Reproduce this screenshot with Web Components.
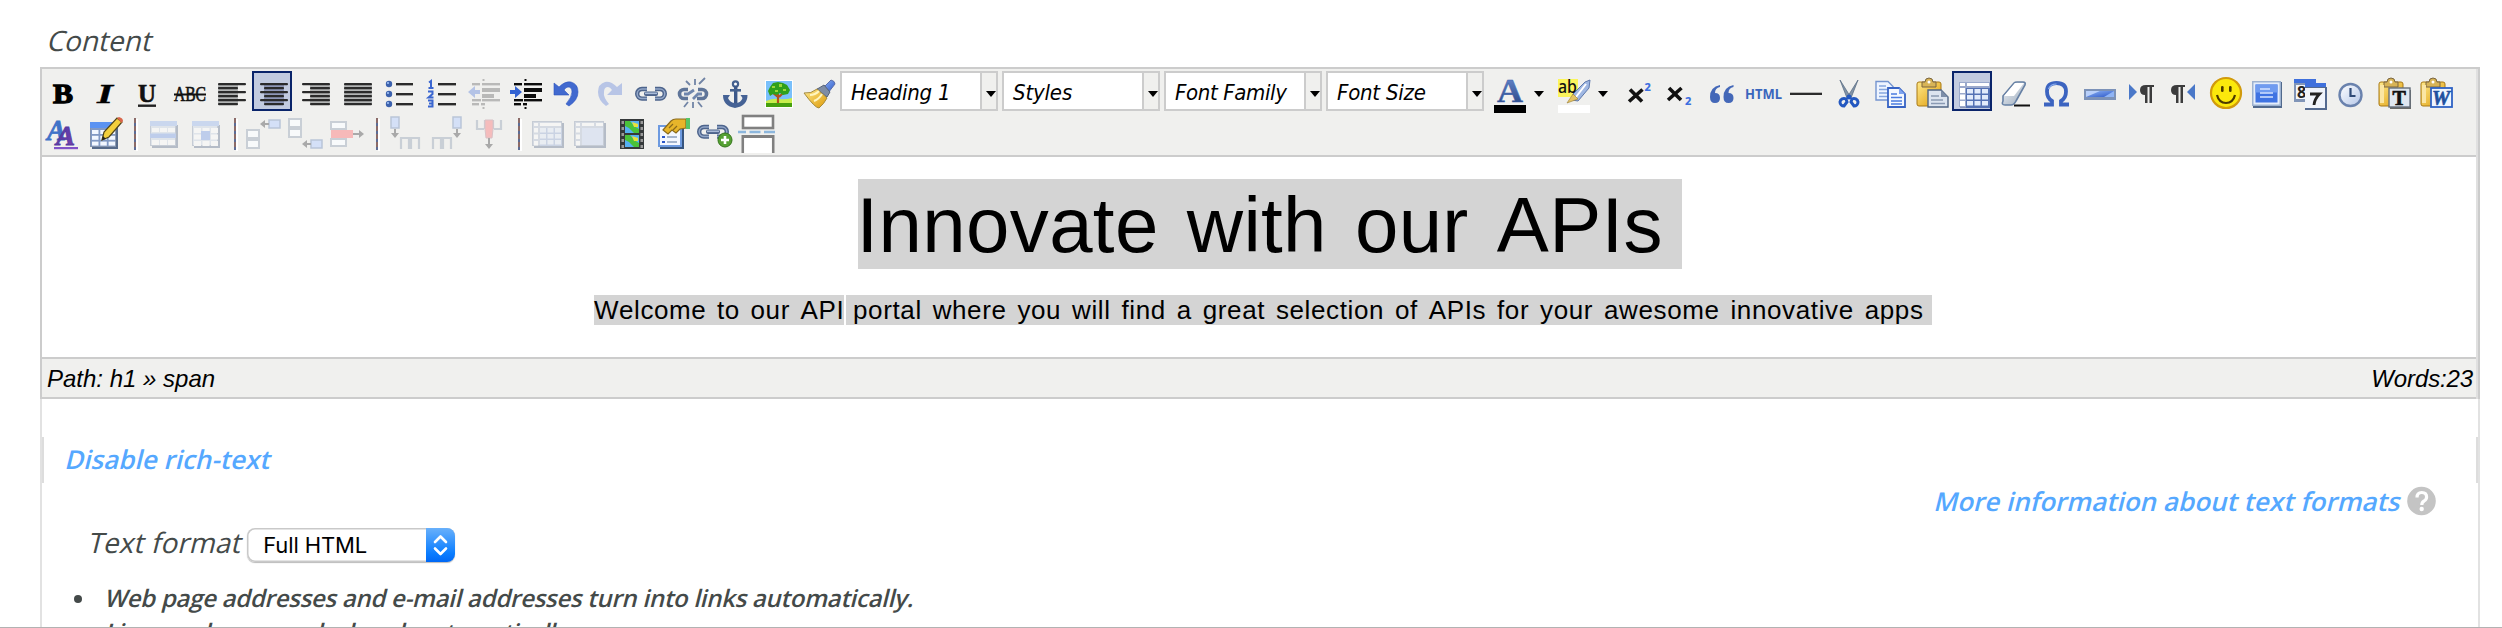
<!DOCTYPE html>
<html lang="en">
<head>
<meta charset="utf-8">
<title>Content editor</title>
<style>
html,body{margin:0;padding:0;background:#fff}
body{width:2502px;height:628px;overflow:hidden;font-family:"Open Sans","Noto Sans",sans-serif}
</style>
</head>
<body>
<content-page></content-page>
<script>
/* Gradients shared by the icon drawings; copied into each icon's own svg. */
const DEFS = `<defs>
<linearGradient id="bl" x1="0" y1="0" x2="1" y2="1"><stop offset="0" stop-color="#8fb4f5"/><stop offset="1" stop-color="#2a56c8"/></linearGradient>
<linearGradient id="nv" x1="0" y1="0" x2="0" y2="1"><stop offset="0" stop-color="#6d90d6"/><stop offset="1" stop-color="#223f7c"/></linearGradient>
<linearGradient id="gd" x1="0" y1="0" x2="1" y2="1"><stop offset="0" stop-color="#ffe98a"/><stop offset="1" stop-color="#dd9a08"/></linearGradient>
<linearGradient id="wh" x1="0" y1="0" x2="1" y2="1"><stop offset="0" stop-color="#fff"/><stop offset="1" stop-color="#b4c6e8"/></linearGradient>
<linearGradient id="gr" x1="0" y1="0" x2="1" y2="1"><stop offset="0" stop-color="#f4f7fa"/><stop offset="1" stop-color="#9aa9bb"/></linearGradient>
<linearGradient id="pu" x1="0" y1="0" x2="1" y2="1"><stop offset="0" stop-color="#4a3aa4"/><stop offset="1" stop-color="#7a3fae"/></linearGradient>
</defs>`;
const R = (x,y,w,h,f,e='') => `<rect x="${x}" y="${y}" width="${w}" height="${h}" fill="${f}" ${e}/>`;
const P = (d,f,e='') => `<path d="${d}" fill="${f}" ${e}/>`;
const S = (d,c,w,e='') => `<path d="${d}" fill="none" stroke="${c}" stroke-width="${w}" ${e}/>`;
const T = (x,y,s,f,t,e='') => `<text x="${x}" y="${y}" font-size="${s}" fill="${f}" ${e}>${t}</text>`;
const SERIF = 'font-family="Liberation Serif,serif"';
const SANS = 'font-family="Noto Sans,sans-serif"';
const align = (sx,sw,gw,gx) => {
  let o = R(gx,13,gw,20,'#b3b5b5');
  for (let i=0;i<6;i++) o += (i%2 ? R(sx,12+i*4,sw,2.2,'#2b2b2b','rx="1"') : R(8,12+i*4,28,2.2,'#2b2b2b','rx="1"'));
  return o;
};
const indent = (c,a,flip) =>
  R(10,12,8,2.4,c)+R(10,28,9,2.4,c)+R(10,32,7,2.4,c)+R(20,12,18,2.4,c)+R(20,17,18,4,c)+R(20,23,12,4,c)+R(20,28,18,2.4,c)+R(19,32,4,2.4,c)
  +R(20.5,8,2,2,c)+R(20.5,36,2,2,c)
  +(flip ? P('M6 21l7-6v4h5v4h-5v4z',a) : P('M18 21l-7-6v4H6v4h5v4z',a));
const grid = (x,y,w,h,f) => R(x+2,y+2,w,h,'#566a8a')+R(x,y,w,h,'#8393ad')+R(x+1,y+1,w-2,h-2,f);
const cells = (x,y,n,m,w,h,g,f) => {let o='';for(let i=0;i<n;i++)for(let j=0;j<m;j++)o+=R(x+i*(w+g),y+j*(h+g),w,h,f);return o;};
const clip = P('M7 13q0-2 2-2h20q2 0 2 2v20q0 2-2 2H9q-2 0-2-2z','url(#gd)','stroke="#a87914"')
  +P('M12 16v-5h3q0-4 4-4t4 4h3v5z','#d8b456','stroke="#7a6540"')+`<circle cx="19" cy="11" r="1.5" fill="#fff"/>`;
const clip2 = clip+P('M8 14h4v18H8z','#fbe6a4');
const chain = S('M17 18H12a4.800 4.800 0 0 0 0 9.600h5M25 18h5a4.800 4.800 0 0 1 0 9.600h-5','#4d648c',4.400)+S('M17 18H12a4.800 4.800 0 0 0 0 9.600h5M25 18h5a4.800 4.800 0 0 1 0 9.600h-5','#93a7c8',1.500)+R(14,20.500,14,4.500,'#4d648c','rx="2"')+R(15,21.500,12,1.600,'#a9bbd8');
const clock = (x,y,r)=>`<circle cx="${x}" cy="${y}" r="${r}" fill="url(#wh)" stroke="#6a82ad" stroke-width="2.4"/>`;
const box = (x,y,w,h)=>R(x,y,w,h,'#f8fafb','stroke="#c9cfd6" stroke-width="2"');
const fade = s => `<g opacity=".38">${s}</g>`;

const ICONS = {
bold: T(11,32,27,'#000','B',SERIF+' font-weight="700" stroke="#000" stroke-width="1.3" textLength="20" lengthAdjust="spacingAndGlyphs"'),
italic: T(13,32,27,'#000','I',SERIF+' font-style="italic" font-weight="700" stroke="#000" stroke-width=".4" textLength="16" lengthAdjust="spacingAndGlyphs"'),
underline: T(12,31,25,'#111','U',SERIF+' font-weight="700" stroke="#111" stroke-width=".6" textLength="18" lengthAdjust="spacingAndGlyphs"')+R(12,33.5,18,2.4,'#222'),
strike: T(6,30,20,'#111','ABC',SERIF+' font-weight="400" stroke="#111" stroke-width=".6" textLength="32" lengthAdjust="spacingAndGlyphs"')+R(6,22.500,32,2,'#111'),
left: align(8,20,20,8), center: align(12,20,20,12).replace('#b3b5b5','#8f98b8'), right: align(16,20,20,16), justify: align(8,28,28,8),
bullist: [13,23,33].map(y=>`<circle cx="11" cy="${y}" r="3.2" fill="#3c62ad"/><circle cx="10" cy="${y-1}" r="1.1" fill="#9fc0f5"/>`+R(18,y-1,17,2.4,'#2b2b2b')).join(''),
numlist: S('M9 11.500l2-1.500v7M8.500 17h5','#3a66d0',2)+S('M8 20.500h4.500v2.500l-4 3.500h5','#3a66d0',2)+S('M8 29.500h4.500v6H8M9 32.500h3.500','#3a66d0',2)+[13,23,33].map(y=>R(18,y-1,18,2.4,'#2b2b2b')).join(''),
outdent: indent('#b9b9b8','#b4c3e6',true), indent: indent('#0c0c0c','#3363d2',false),
undo: P('M8 12l5 4q6-6 12-5 7 2 7 10 0 8-9 14l-3-2q6-7 6-12 0-5-4-5-2 0-4 3l5 5H8z','#4169cf','stroke="#2c54bd" stroke-width=".6"'),
redo: P('M34 12l-5 4q-6-6-12-5-7 2-7 10 0 8 8 14l3-2q-6-7-5-12 0-5 4-5 2 0 4 3l-5 5h15z','#b8c5e6'),
link: chain,
unlink: S('M16 18.5H12a4.5 4.5 0 0 0 0 9h4M26 18.5h4a4.5 4.5 0 0 1 0 9h-5','#5f7599',3.6)+S('M12 23h4l6-4M30 23h-4l-5 5','#6f86ad',2.8)+S('M23 14V8M18 14l-4-4M27 13l6-6M21 31v6M16 31l-4 5M26 31l4 5','#7184a5',1.8),
anchor: `<circle cx="21.5" cy="13" r="2.6" fill="#fff" stroke="#45618f" stroke-width="2.2"/>`+R(20,15,3.4,19,'#3c588a')+R(16,18,11,2.6,'#45618f')+P('M9 24h7l-2 3q2 5 7.500 5t7-5l-2-3h7q0 11-12.500 13Q9 35 9 24z','#456295'),
image: R(9,9,28,28,'#fff')+R(10,10,26,21,'#79c0fb')+R(10,30,26,6,'#47a00e')+P('M10 30q7-3 13-2t13-1v5H10z','#c8ee4c')+S('M22 32v-9M23 26l5-5M22 26l-5-4','#b3501e',2.2)+P('M12 20l2-4 3-4 5-1 5 1 4 2 3 5-2 4-5 1-3-2-3 2-4-1-3 2z','#2fa01c')+P('M16 15h3v2h-3zM23 13h3v3h-3zM27 18h3v2h-3zM19 19h3v2h-3z','#9ad83a'),
cleanup: P('M33 9q4 1 4 4l-7 9-5-5z','url(#bl)','stroke="#5c6ea8"')+P('M21 17l5-3 6 7-3 5-10-8z','#7f8da4','stroke="#566378"')+P('M6 22q7 1 13-4l10 9q-3 6-8 10-4 0-15-15z','url(#gd)','stroke="#a58a3c"')+S('M12 24q5 0 9-4M16 30q5-2 8-7','#fff6c0',2),
forecolor: T(9,31,34,'url(#nv)','A',SERIF+' font-weight="700" stroke="#3c61ad" stroke-width=".5" textLength="26" lengthAdjust="spacingAndGlyphs"')+R(6,34,32,8,'#000')+P('M46 20h10l-5 6z','#000'),
backcolor: R(6,8,20,18,'#fbf55c')+P('M33 11l5-2-1 8-11 13-6-1 1-6z','#9fb7e2','stroke="#5d78ab"')+S('M34 13L24 26','#fff',2)+P('M15 32l6-9 5 5z','#e5c463','stroke="#9a7c30" stroke-width=".6"')+T(6,22,18,'#111','ab',SANS+' font-weight="500" textLength="19" lengthAdjust="spacingAndGlyphs"')+R(6,34,32,8,'#fff')+P('M46 20h10l-5 6z','#000'),
sup: S('M14 18.500l12 12M26.500 18.500L13 30.500','#111',3.600)+T(28.500,20,11,'#3d6fe0','2',SANS+' font-weight="800"'),
sub: S('M11 17l12 12M23.500 17L10 29','#111',3.600)+T(27,34,11,'#3d6fe0','2',SANS+' font-weight="800"'),
quote: P('M20 14q-10 2-10 12 0 6 5 6t5-5-5-5q0-5 5-6zM33.500 14q-10 2-10 12 0 6 5 6t5-5-5-5q0-5 5-6z','#4468b8'),
html: T(3,28,14,'#3a66bd','HTML',SANS+' font-weight="700" textLength="37" lengthAdjust="spacingAndGlyphs"'),
hr: R(6,21.700,32,2.300,'#2b2b2b'),
cut: P('M14 9l10 16-3 2zM32 9L22 25l3 2z','#8193a8','stroke="#5d7085" stroke-width=".8"')+S('M14 31a4 4 0 0 1 6-3l1 3-3 4a4 4 0 0 1-4-4zM32 31a4 4 0 0 0-6-3l-1 3 3 4a4 4 0 0 0 4-4z','#2358c0',3)+`<circle cx="23" cy="26" r="2.500" fill="#2358c0"/>`,
copy: P('M8 10.500h12l5 5V29H8z','#eef4ff','stroke="#7494cf" stroke-width="1.400"')+S('M11 15h7M11 18.500h10M11 22h9M11 25.500h9','#86a6de',1.600)+P('M20 17h11l6 6v13H20z','#f4f8ff','stroke="#3763c4" stroke-width="1.800"')+P('M31 17v6h6z','#7fa4ef')+S('M23 23h6M23 26.500h11M23 30h11M23 33h11','#4a7be0',1.700),
paste: clip+P('M18 19h13l7 7v10H18z','#dce4ef','stroke="#4f6484" stroke-width="1.400"')+P('M31 19v7h7z','#7d8ea8')+S('M21 25h8M21 29h12M21 32.500h14','#8a9ab3',1.600),
table: R(8,12,30,25,'#8592b4')+R(7,11,31,25,'#9aa9cc')+R(8,12,5,3,'#fff')+R(15,12,22,3,'#fff')+cells(8,17,1,3,5,5,1.500,'#fff')+R(14,17,24,20,'#5572b4')+cells(15,18,3,3,6,4.500,1.500,'#e2ebfb'),
eraser: P('M9 25L20 12q1-1 3-1h6q3 0 2 3L22 30q-2 4-5 4h-6q-4 0-2-4z','url(#gr)','stroke="#6680a4" stroke-width="1.600"')+P('M10 25l11-13h9L20 25z','#fff')+R(20,33.500,16,2,'#111'),
omega: S('M8 33.500h8v-3.500q-5-3-5-9.500 0-8.500 9.500-8.500t9.500 8.500q0 6.500-5 9.500v3.500h8','#3c64c0',3.800)+S('M12.500 18q2-5 8-5','#8db0f0',1.200),
advhr: R(6,18,32,11,'#7c92b8')+R(8,20,28,6,'url(#bl)')+P('M8 26l14-6H8z','#b9d0fa')+P('M36 20v6l-10 0z','#8fb4f5'),
ltr: P('M9 13l8 8-8 8z','#4a78c8')+P('M34 14v2h-2v16h-2.500V16h-2v16H25v-8q-5 0-5-5t6-5z','#3c3c3c'),
rtl: P('M33 13l-8 8 8 8z','#4a78c8')+P('M23 14v2h-2v16h-2.500V16h-2v16H14v-8q-5 0-5-5t6-5z','#3c3c3c'),
smiley: `<circle cx="22" cy="22" r="15" fill="#fbe80c" stroke="#d19a0c" stroke-width="2.200"/>`+R(17,15,2.600,6,'#4c3a00','rx="1.200"')+R(25,15,2.600,6,'#4c3a00','rx="1.200"')+S('M13 24q2 8 9 8t9-8','#4c3a00',2.200),
full: R(7,11,29,26,'#51698c')+R(6,10,29,25,'#9db2d0')+R(7.500,11.500,26,22,'#e4edfb')+R(9.500,13.500,22,18,'#3f73e2')+R(9.500,13.500,22,8,'#6f9bf0')+S('M14 18h10M14 22h13M14 26h13','#d5e4ff',1.600),
date: R(6,8,22,5,'#3f70dc')+R(6,12,22,19,'#8195b8')+R(8,14,18,14,'#f3f6fb')+T(9,27,16,'#222','8',SANS+' font-weight="700"')+R(17,12,21,5,'#3f70dc')+R(17,16,22,23,'#546a90')+R(17,17,20,20,'#f0f4fb')+S('M22 23h9.500q-5 5-5.500 11','#222',2.800),
time: clock(20.500,24,11)+S('M20.500 17v8h5','#304b78',2.200),
pastetext: clip2+R(18,19,21,19,'#6a6a66')+R(17,17,21,19,'#dfe7f0','stroke="#66707c" stroke-width="1.400"')+T(20.500,34,20,'#111','T',SERIF+' font-weight="700" stroke="#111" stroke-width=".7"'),
pasteword: clip2+R(17,17,21,19,'#eef5ff','stroke="#2e62c4" stroke-width="1.800"')+T(18,34,20,'#20509f','W',SERIF+' font-weight="700" font-style="italic" stroke="#20509f" stroke-width=".6" textLength="18" lengthAdjust="spacingAndGlyphs"'),
styleprops: T(5,27,30,'#3f72c8','A',SERIF+' font-weight="700" font-style="italic" stroke="#3f72c8" stroke-width=".8" textLength="19" lengthAdjust="spacingAndGlyphs"')+T(14,32,27,'url(#pu)','A',SERIF+' font-weight="700" font-style="italic" stroke="#54399f" stroke-width=".8" textLength="19" lengthAdjust="spacingAndGlyphs"')+R(12,34,24,2.200,'#8052c8'),
edittable: grid(6,10,26,24,'#8199c4')+R(6,9,27,6,'#5b93f2')+cells(8,17,3,3,6.500,4,1.800,'#f2f7ff')+P('M18 27l2-8L33 5l5 4-13 15z','#f2cf3c','stroke="#4d4218" stroke-width="1.200"')+P('M33 5l2-1q4 1 4 4l-1.500 2z','#d9664a')+P('M18 27l1-4 3 3z','#222'),
rowprops: fade(grid(8,10,26,23,'#c5d1e6')+R(8,8,27,5,'#8fb0ef')+cells(10,15,3,1,7,4,1,'#fff')+cells(10,27,3,1,7,5,1,'#fff')+R(8,20.500,26,4.500,'#6f97e8')),
cellprops: fade(grid(8,10,26,23,'#c5d1e6')+R(8,8,27,5,'#8fb0ef')+cells(10,15,3,3,7,5,1.500,'#fff')+R(17,18,9,9,'#6f97e8')),
rowbefore: box(5,17,12,8)+box(5,27,12,8)+R(27,7,11,8,'#d4e0f7','stroke="#b9c5d8" stroke-width="1.500"')+P('M18 11l5-4v3h4v2h-4v3z','#a9a9a9'),
rowafter: box(5,6,12,8)+box(5,16,12,8)+R(27,27,11,8,'#d4e0f7','stroke="#b9c5d8" stroke-width="1.500"')+P('M18 31l5-4v3h4v2h-4v3z','#a9a9a9'),
delrow: box(5,9,15,7)+box(5,26,15,7)+R(5,17,22,8,'#f7b9b9')+P('M38 21l-5-4v3h-6v2h6v3z','#a9a9a9'),
colbefore: R(7,4,8,11,'#d4e0f7','stroke="#b9c5d8" stroke-width="1.500"')+P('M11 25l-4-5h3v-4h2v4h3z','#a9a9a9')+S('M17 36V25h8v11M27 36V25h8v11','#c9cfd6',2.200),
colafter: R(27,4,8,11,'#d4e0f7','stroke="#b9c5d8" stroke-width="1.500"')+P('M31 25l-4-5h3v-4h2v4h3z','#a9a9a9')+S('M7 36V25h8v11M17 36V25h8v11','#c9cfd6',2.200),
delcol: S('M9 7v9h7M17 7v9M33 7v9h-7M25 7v9','#c9cfd6',2.200)+P('M17 7h8v9l-1 9h-6l-1-9z','#f5bcbc','stroke="#d9c2c6"')+P('M21 36l-4-5h3v-6h2v6h3z','#a9a9a9'),
split: fade(grid(6,8,30,25,'#aab8d0')+R(8,10,4,3,'#fff')+R(14,10,21,3,'#fff')+cells(8,15,1,3,4,4.500,2,'#fff')+R(14,15,22,18,'#8fa6d2')+cells(14,15,3,3,6,4.500,1.500,'#dfe9fb')),
merge: fade(grid(6,8,30,25,'#aab8d0')+R(8,10,4,3,'#fff')+R(14,10,12,3,'#fff')+R(28,10,7,3,'#fff')+cells(8,15,1,3,4,4.500,2,'#fff')+R(14,15,21,17,'#c3d3f4')),
film: R(10,6,24,30,'#35393a')+R(15,8,14,12,'#56b0f2')+R(15,22,14,12,'#56b0f2')+P('M15 8h5l4 5 5 3v4h-5l-5-5-4-2zM15 22h5l4 5 5 3v4h-5l-5-5-4-2z','#49c23a')+P('M22 9l6 2v3h-4zM22 23l6 2v3h-4z','#e9e13c')+cells(11.500,8,1,5,2.500,3,3,'#9a9a9a')+cells(30.500,8,1,5,2.500,3,3,'#9a9a9a'),
attribs: R(8,13,24,23,'#37557f')+R(6,12,24,22,'#6d9ae0')+R(8,14,20,18,'#f3f7ff')+R(10,23,3,2,'#2a56c8')+R(10,28,3,2,'#2a56c8')+S('M15 24h10M15 29h10','#a4b4cc',1.800)+P('M11 17l8-9q2-2 5-2h10v9l-6 1-4 4-4-3-4 4z','#e7b52a','stroke="#8a6a1c" stroke-width="1.200"')+S('M17 15l4-4M21 17l4-4','#8a6a1c',1.200)+R(34,5,4,11,'#57c468'),
linkadd: `<g transform="translate(-2 -4)">${chain}</g><circle cx="31" cy="27" r="7" fill="#55a032" stroke="#35761c"/>`+S('M31 23v8M27 27h8','#fff',2.600),
pagebreak: R(7,3,30,12,'#fff','stroke="#808080" stroke-width="2.600"')+P('M5.500 40V22h33v18h-2.700V25H8.200v15z','#808080')+R(8.200,25,27.600,15,'#fff')+S('M2 19h40','#8db7dd',2.600,'stroke-dasharray="11 3.500" stroke-dashoffset="3"')
};

const define = (name, html, setup) => customElements.define(name, class extends HTMLElement {
  connectedCallback(){
    if (this.shadowRoot) return;
    const root = this.attachShadow({mode:'open'});
    const t = document.createElement('template');
    t.innerHTML = typeof html === 'function' ? html(this) : html;
    root.append(t.content.cloneNode(true));
    if (setup) setup(this, root);
  }
});

/* One line of text tracked so that it spans the given width; "oblique" slants the upright face about its baseline. */
define('tracked-text', `<style>:host{display:inline-block;white-space:pre}span{display:inline-block;white-space:pre}
:host([oblique]) span{font-style:normal;transform:skewX(-14deg);transform-origin:0 calc(50% + .388em)}</style><span><slot></slot></span>`,
  (el, root) => {
    const s = root.querySelector('span'), w = +el.getAttribute('span');
    s.style.letterSpacing = (w - s.offsetWidth) / el.textContent.length + 'px';
  });

define('tool-button', el => `<style>
:host{display:block;width:40px;height:40px;box-sizing:border-box;flex:none}
:host([wide]){width:62px}
:host([active]){background:#c2cbe0;box-shadow:inset 0 0 0 2px #0a246a}
svg{display:block;overflow:visible}
</style><svg width="40" height="40" viewBox="0 0 40 40">${DEFS}${ICONS[el.getAttribute('icon')]}</svg>`);

define('tool-separator', `<style>:host{display:block;width:14px;height:40px;flex:none}
i{display:block;width:2px;height:32px;margin:5px 0 0 8px;background:repeating-linear-gradient(#8b6b68 0 5px,#5d6c94 5px 8px);box-shadow:2px 1px 0 #fff}</style><i></i>`);

define('list-box', `<style>
:host{display:flex;box-sizing:border-box;width:158px;height:40px;border:2px solid #ccc;background:#fff;margin-right:2px;flex:none;color:#000;
font:italic 22px/39px "DejaVu Sans Condensed","DejaVu Sans",sans-serif;font-stretch:condensed}
div{flex:1;padding-left:9px}
b{width:14px;border-left:2px solid #ccc;background:#f0f0ee}
svg{display:block}
</style><div><slot></slot></div><b><svg width="14" height="36" viewBox="0 0 14 36"><path d="M4 18h10l-5 6z" fill="#000"/></svg></b>`);

const btn = n => `<tool-button icon="${n}"></tool-button>`;
define('tool-bar', `<style>
:host{display:flex;flex-direction:column;gap:2px;background:#f0f0ee;padding:2px 0;height:82px;border-bottom:2px solid #ccc}
div{display:flex;gap:2px;height:40px}
</style>
<div>${['bold','italic','underline','strike','left'].map(btn).join('')}<tool-button icon="center" active></tool-button>${['right','justify','bullist','numlist','outdent','indent','undo','redo','link','unlink','anchor','image','cleanup'].map(btn).join('')}<list-box><tracked-text span="99">Heading 1</tracked-text></list-box><list-box><tracked-text span="59">Styles</tracked-text></list-box><list-box><tracked-text span="112">Font Family</tracked-text></list-box><list-box><tracked-text span="89">Font Size</tracked-text></list-box><tool-button wide icon="forecolor"></tool-button><tool-button wide icon="backcolor"></tool-button>${['sup','sub','quote','html','hr','cut','copy','paste'].map(btn).join('')}<tool-button icon="table" active></tool-button>${['eraser','omega','advhr','ltr','rtl','smiley','full','date','time','pastetext','pasteword'].map(btn).join('')}</div>
<div>${['styleprops','edittable'].map(btn).join('')}<tool-separator></tool-separator>${['rowprops','cellprops'].map(btn).join('')}<tool-separator></tool-separator>${['rowbefore','rowafter','delrow'].map(btn).join('')}<tool-separator></tool-separator>${['colbefore','colafter','delcol'].map(btn).join('')}<tool-separator></tool-separator>${['split','merge','film','attribs','linkadd','pagebreak'].map(btn).join('')}</div>`);

define('edit-area', `<style>
:host{display:block;height:200px;box-sizing:border-box;padding-top:22px;color:#000;font-family:"Liberation Sans",Arial,sans-serif;font-kerning:none}
div{display:flex}
mark{display:block;background:#d4d4d4;color:#000;white-space:pre}
.h{margin-left:816px;font-size:78px;line-height:93px;word-spacing:6px}
.h mark{width:824px;height:90px}
.h tracked-text{margin-left:-1.500px}
.p{margin:26px 0 0 552px;gap:2px;font-size:26px;line-height:30px;word-spacing:3px}
.p mark{height:30px;box-sizing:border-box}
.a{width:250px}.b{width:1086px;padding-left:7px}
</style>
<div class="h"><mark><tracked-text span="806">Innovate with our APIs</tracked-text></mark></div>
<div class="p"><mark class="a"><tracked-text span="250">Welcome to our API</tracked-text></mark><mark class="b"><tracked-text span="1071">portal where you will find a great selection of APIs for your awesome innovative apps</tracked-text></mark></div>`);

define('status-bar', `<style>
:host{display:flex;justify-content:space-between;height:38px;border-top:2px solid #ccc;border-bottom:2px solid #ccc;background:#f0f0ee;color:#000;padding:0 3px 0 5px;
font:italic 24px/39px "Liberation Sans",Arial,sans-serif}
</style><tracked-text span="168">Path: h1 » span</tracked-text><tracked-text span="102">Words:23</tracked-text>`);

define('rich-editor', `<style>
:host{display:block;box-sizing:border-box;width:2440px;height:332px;border:2px solid #ccc;border-bottom:0}
section{border-right:2px solid #e0e0e0;height:330px}
</style><section><tool-bar></tool-bar><edit-area></edit-area><status-bar></status-bar></section>`);

define('format-select', `<style>
:host{display:flex;box-sizing:border-box;width:208px;height:34px;border-radius:8px;overflow:hidden;box-shadow:inset 0 0 0 1.5px #c9c9c9,0 1px 1px #bbb;color:#000;
font:22px/35px "Inter","Roboto",sans-serif}
div{flex:1;padding-left:16px}
svg{display:block}
</style><div><slot></slot></div><svg width="29" height="34" viewBox="0 0 29 34"><defs><linearGradient id="g" x1="0" y1="0" x2="0" y2="1"><stop offset="0" stop-color="#68b0fb"/><stop offset=".75" stop-color="#0a7dff"/><stop offset="1" stop-color="#0068f5"/></linearGradient></defs><path d="M0 0h29v34H0z" fill="url(#g)"/><path d="M9 14l5.500-5.500L20 14M9 20.500l5.500 5.500 5.500-5.500" fill="none" stroke="#fff" stroke-width="2.600" stroke-linecap="round" stroke-linejoin="round"/></svg>`);

define('help-icon', `<style>:host{display:block;width:29px;height:30px}svg{display:block}</style>
<svg width="29" height="30" viewBox="0 0 29 30"><circle cx="14.500" cy="15" r="14.300" fill="#c4c4c4"/><path d="M10 11.500q0-5 4.800-5t4.800 4.500q0 2.500-2.500 4-2.300 1.300-2.300 4" fill="none" stroke="#fff" stroke-width="3.200"/><circle cx="14.700" cy="23" r="2.200" fill="#fff"/></svg>`);

define('format-panel', `<style>
:host{display:block;box-sizing:border-box;width:2440px;height:240px;border:solid #e2e2e2;border-width:0 2px;padding-top:38px;color:#444a49}
a{color:#55a8ff;font-weight:600}
.toggle{height:46px;border:solid #ddd;border-width:0 2px;padding-left:20px;font-size:26px;line-height:44px}
.more{display:flex;justify-content:flex-end;gap:8px;padding:0 42px 0 0;height:36px;font-size:26px;line-height:36px}
help-icon{margin-top:3px}
.format{display:flex;gap:7px;height:62px;padding:9px 0 0 45px;box-sizing:border-box;font-size:28px;line-height:28px}
ul{margin:0;padding:0 0 0 62px;font-size:24px;line-height:34px;font-weight:600;list-style:none}
li{display:flex}
li::before{content:"";width:8px;height:8px;border-radius:50%;background:#444a49;margin:14px 22px 0 -30px}
</style>
<div class="toggle"><a><tracked-text oblique span="205">Disable rich-text</tracked-text></a></div>
<div class="more"><a><tracked-text oblique span="466">More information about text formats</tracked-text></a><help-icon></help-icon></div>
<div class="format"><tracked-text oblique span="153">Text format</tracked-text><format-select><tracked-text span="104">Full HTML</tracked-text></format-select></div>
<ul><li><tracked-text oblique span="809">Web page addresses and e-mail addresses turn into links automatically.</tracked-text></li>
<li><tracked-text oblique span="468">Lines and paragraphs break automatically.</tracked-text></li></ul>`);

define('content-page', `<style>
:host{display:block;width:2502px;height:628px;box-sizing:border-box;border-bottom:1px solid #b2b2b2;overflow:hidden;background:#fff}
label{display:block;height:67px;box-sizing:border-box;padding:20px 0 0 46px;font-size:28px;line-height:40px;color:#444a49}
main{margin-left:40px}
</style><label><tracked-text oblique span="105">Content</tracked-text></label>
<main><rich-editor></rich-editor><format-panel></format-panel></main>`);
</script>
</body>
</html>
